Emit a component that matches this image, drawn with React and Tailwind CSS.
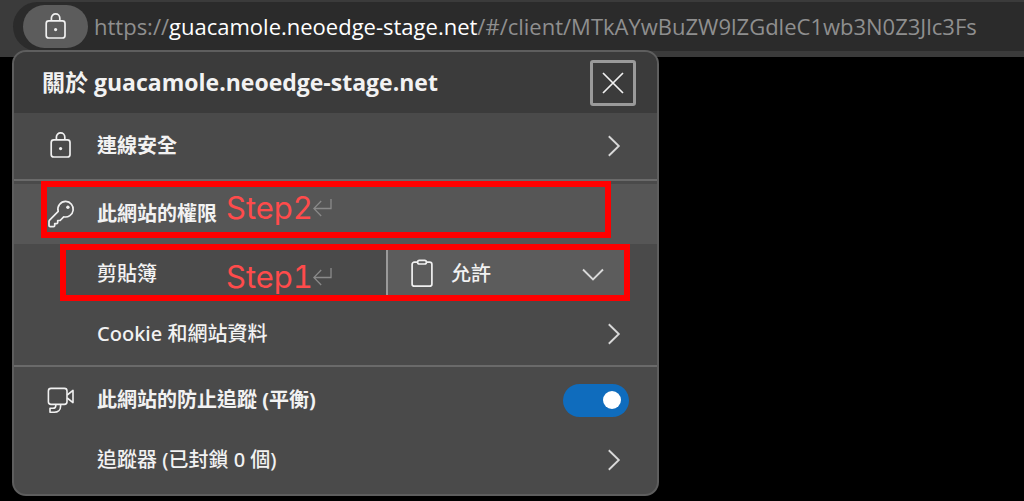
import { useState } from 'react';

function LockIcon() {
    return (
        <svg width="28" height="28" viewBox="0 0 28 28" fill="none" stroke="#f0f0f0" strokeWidth="1.7">
            <rect x="4.2" y="7.8" width="18.8" height="17.2" rx="2.6" />
            <path d="M9.4 7.6V5.1a4.2 4.2 0 0 1 8.4 0v2.5" />
            <circle cx="13.6" cy="16.6" r="1.6" fill="#f0f0f0" stroke="none" />
        </svg>
    );
}

function KeyIcon() {
    return (
        <svg width="28" height="28" viewBox="0 0 28 28" fill="none" stroke="#f0f0f0" strokeWidth="1.7" strokeLinejoin="round">
            <path d="M18.8 1.4a7.8 7.8 0 0 0-7.6 10L2.6 20.2c-.4.4-.6.8-.6 1.4v3.8c0 .7.5 1.2 1.2 1.2h3.3c.7 0 1.2-.5 1.2-1.2v-1.8h1.8c.7 0 1.2-.5 1.2-1.2v-1.9h1.9c.4 0 .8-.2 1-.5l3.1-3.2a7.8 7.8 0 1 0 2.1-15.4z" />
            <circle cx="20.9" cy="7.2" r="1.7" fill="#f0f0f0" stroke="none" />
        </svg>
    );
}

function TrackingIcon() {
    return (
        <svg width="28" height="28" viewBox="0 0 28 28" fill="none" stroke="#f0f0f0" strokeWidth="1.6" strokeLinejoin="round">
            <rect x="1.4" y="2.4" width="18.6" height="16" rx="2.6" />
            <path d="M20.2 9l5.8-4.6v12.2L20.2 12" />
            <path d="M8.8 18.6v.8c0 1.8-1 2.8-2.8 2.8H3v4h4.2c3.8 0 6.4-2.4 6.4-6v-1.6" />
        </svg>
    );
}

function ClipboardIcon() {
    return (
        <svg width="24" height="30" viewBox="0 0 24 30" fill="none" stroke="#f0f0f0" strokeWidth="1.7">
            <path d="M7.6 3.2H4.4A2.3 2.3 0 0 0 2.1 5.5v19.4a2.3 2.3 0 0 0 2.3 2.3h15.2a2.3 2.3 0 0 0 2.3-2.3V5.5a2.3 2.3 0 0 0-2.3-2.3h-3.2" />
            <rect x="7.6" y="1.4" width="8.8" height="3.6" rx="1.8" />
        </svg>
    );
}

function ChevronRight() {
    return (
        <svg width="30" height="24" viewBox="0 0 30 24" fill="none" stroke="#d8d8d8" strokeWidth="1.9">
            <path d="M9.8 2.2l10 9.8-10 9.8" />
        </svg>
    );
}

function ReturnMark() {
    return (
        <svg width="20" height="20" viewBox="0 0 20 20" fill="none" stroke="#8a8a8a" strokeWidth="1.3">
            <path d="M18 1v9.5H.8M8.2 3L.8 10.5 8.2 18" />
        </svg>
    );
}

function PanelRow({ icon, label, bold, chevron, active }) {
    return (
        <button
            className={`flex h-[60px] w-full items-center gap-[22px] pl-[33px] pr-7 text-left ${active ? 'bg-[#565656]' : ''}`}
        >
            <span className="w-7 shrink-0">{icon}</span>
            <span className={`flex-1 ${bold ? 'font-bold' : 'font-medium'}`}>{label}</span>
            {chevron && <ChevronRight />}
        </button>
    );
}

function StepNote({ label, className }) {
    return (
        <div className={`pointer-events-none absolute flex h-[57px] items-center border-[6px] border-[#ff0000] ${className}`}>
            <span className="font-['Inter',sans-serif] text-[31px] leading-8 tabular-nums text-[#ff4b4b]">{label}</span>
            <ReturnMark />
        </div>
    );
}

function AddressBar() {
    return (
        <header className="h-[57px] overflow-hidden bg-[#3b3b3b] pl-[13px] pt-[2px]">
            <div className="flex h-[49px] items-center gap-[6px] rounded-l-full bg-[#2b2b2b] pl-[10px]">
                <button
                    aria-label="檢視網站資訊"
                    className="flex h-[43px] w-[65px] shrink-0 items-center justify-center rounded-full bg-[#5c5c5c]"
                >
                    <LockIcon />
                </button>
                <div
                    role="textbox"
                    aria-label="網址"
                    className="whitespace-nowrap pb-[2px] font-['Open_Sans',sans-serif] text-[22px] leading-8 text-[#8f8f8f]"
                >
                    https://<span className="font-medium text-white">guacamole.neoedge-stage.net</span>
                    /#/client/MTkAYwBuZW9lZGdleC1wb3N0Z3Jlc3Fs
                </div>
            </div>
        </header>
    );
}

export default function App() {
    const [permission, setPermission] = useState('allow');
    const [prevention, setPrevention] = useState(true);

    return (
        <div className="min-h-screen overflow-hidden bg-black font-['Noto_Sans','Noto_Sans_CJK_TC',sans-serif] text-[20px] leading-7 text-[#f2f2f2]">
            <AddressBar />
            <section className="relative -mt-[7px] ml-3 max-w-[647px] overflow-hidden rounded-[14px] border-2 border-[#5e5e5e] bg-[#4a4a4a]">
                <div className="flex h-[61px] items-center justify-between bg-[#3b3b3b] pl-7 pr-[21px]">
                    <h1 className="pb-[2px] font-['Open_Sans','Noto_Sans_CJK_TC',sans-serif] text-[23px] font-bold leading-8">
                        關於 guacamole.neoedge-stage.net
                    </h1>
                    <button
                        aria-label="關閉"
                        className="flex size-[46px] items-center justify-center rounded-[3px] border-[3px] border-[#9a9a9a]"
                    >
                        <svg width="24" height="24" viewBox="0 0 24 24" stroke="#f0f0f0" strokeWidth="1.7">
                            <path d="M2 2l20 20M22 2L2 22" />
                        </svg>
                    </button>
                </div>

                <div className="border-b-2 border-[#6a6a6a] py-[3px]">
                    <PanelRow icon={<LockIcon />} label="連線安全" bold chevron />
                </div>

                <div className="relative border-b-2 border-[#6a6a6a] pb-px pt-[3px]">
                    <PanelRow icon={<KeyIcon />} label="此網站的權限" bold active />
                    <div className="flex h-[60px] items-center justify-between pl-[83px] pr-7">
                        <label htmlFor="clipboard" className="font-medium">剪貼簿</label>
                        <div className="relative h-12 w-[243px]">
                            <select
                                id="clipboard"
                                value={permission}
                                onChange={(e) => setPermission(e.target.value)}
                                className="h-full w-full appearance-none border-l-2 border-[#9a9a9a] bg-[#5c5c5c] pl-[63px] font-medium"
                            >
                                <option value="allow">允許</option>
                                <option value="block">封鎖</option>
                            </select>
                            <span className="pointer-events-none absolute inset-y-0 left-6 flex items-center">
                                <ClipboardIcon />
                            </span>
                            <span className="pointer-events-none absolute inset-y-0 right-6 flex items-center">
                                <svg width="24" height="16" viewBox="0 0 24 16" fill="none" stroke="#d8d8d8" strokeWidth="1.9">
                                    <path d="M2 3.5l10 10 10-10" />
                                </svg>
                            </span>
                        </div>
                    </div>
                    <PanelRow label="Cookie 和網站資料" chevron />
                    <StepNote label="Step2" className="left-[27px] right-[46px] top-0 pl-[179px] pb-1" />
                    <StepNote label="Step1" className="left-[46px] right-[27px] top-[63px] pl-[160px] pt-2" />
                </div>

                <div className="pb-1 pt-[3px]">
                    <div className="flex h-[60px] items-center gap-[22px] pl-[33px] pr-7">
                        <span className="w-7 shrink-0">
                            <TrackingIcon />
                        </span>
                        <label htmlFor="prevention" className="flex-1 font-bold">此網站的防止追蹤 (平衡)</label>
                        <input
                            id="prevention"
                            type="checkbox"
                            role="switch"
                            checked={prevention}
                            onChange={(e) => setPrevention(e.target.checked)}
                            className="flex h-[33px] w-[66px] appearance-none items-center rounded-full bg-[#7a7a7a] px-2 before:size-[18px] before:rounded-full before:bg-white checked:justify-end checked:bg-[#0f6cbd]"
                        />
                    </div>
                    <PanelRow label="追蹤器 (已封鎖 0 個)" chevron />
                </div>
            </section>
        </div>
    );
}
